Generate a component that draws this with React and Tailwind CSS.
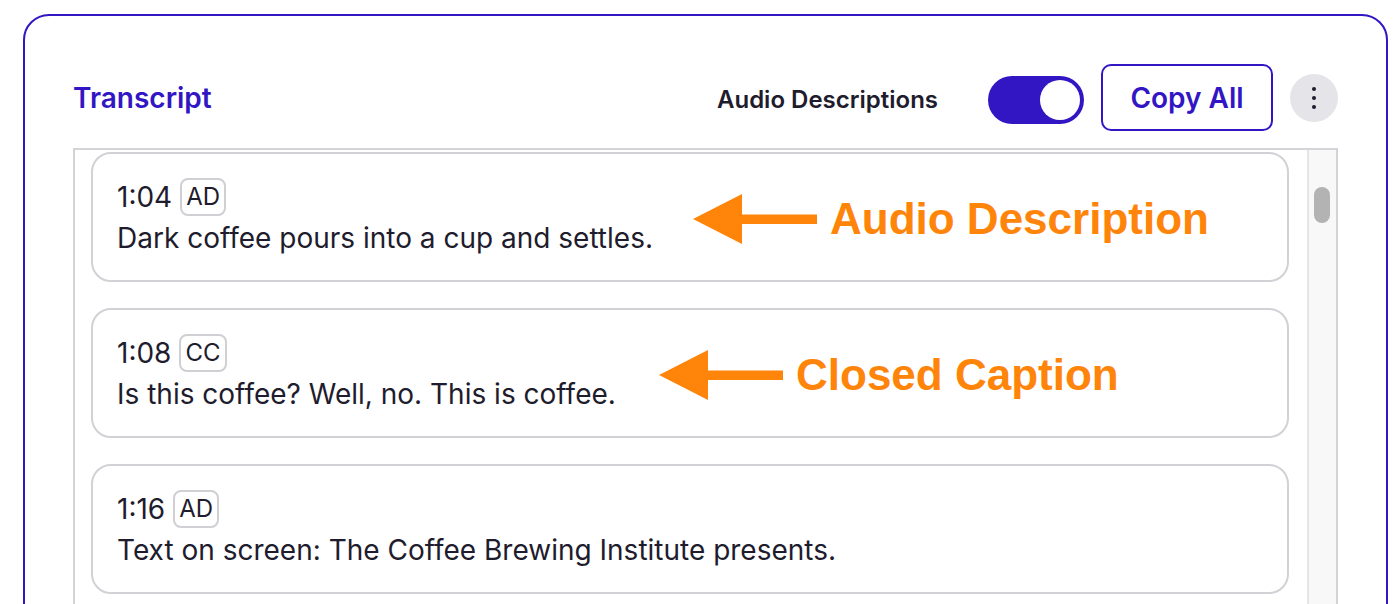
import React from "react";

function Arrow() {
  return (
    <svg width="124" height="50" viewBox="0 0 124 50" className="shrink-0">
      <polygon points="0,25 49,0 49,20.5 124,20.5 124,30 49,30 49,50" fill="#ff840a" />
    </svg>
  );
}

function Annotation({ label, left }) {
  return (
    <div className={`absolute top-[40px] h-[50px] flex items-center ${left}`}>
      <Arrow />
      <span className="ml-[13px] whitespace-nowrap text-[44px] leading-none font-bold text-[#ff840a] [font-family:'Liberation_Sans',Arial,sans-serif]">
        {label}
      </span>
    </div>
  );
}

function Entry({ time, tag, text, annotation, annLeft }) {
  return (
    <div className="relative h-[130px] shrink-0 rounded-[20px] border-2 border-[#d1d1d6] bg-white px-6 py-6">
      <div className="flex h-[38px] items-center gap-2">
        <span className="text-[28px] leading-none text-[#1e1c2d]">{time}</span>
        <span className="flex h-[38px] items-center rounded-lg border-2 border-[#cfcfd4] px-[4px] text-[24px] leading-none text-[#1e1c2d]">
          {tag}
        </span>
      </div>
      <div className="mt-1 text-[28px] leading-9 text-[#1e1c2d] whitespace-nowrap">{text}</div>
      {annotation && <Annotation label={annotation} left={annLeft} />}
    </div>
  );
}

export default function App() {
  return (
    <div className="h-[604px] w-[1400px] overflow-hidden bg-white pt-[14px] pl-[23px] [font-family:Inter,sans-serif]">
      <div className="h-[700px] w-[1365px] rounded-[26px] border-2 border-[#3216c4] bg-white px-12 pt-12">
        <div className="flex h-[67px] items-center justify-between">
          <h2 className="text-[28px] font-semibold leading-none text-[#3216c4]">Transcript</h2>
          <div className="flex items-center">
            <span className="mt-[4px] text-[24px] font-semibold text-[#1e1c2d]">Audio Descriptions</span>
            <div className="mt-[4px] ml-[50px] flex h-[48px] w-[96px] items-center justify-end rounded-full bg-[#3216c4] pr-[4px]">
              <div className="h-[40px] w-[40px] rounded-full bg-white" />
            </div>
            <button className="ml-[17px] flex h-[67px] w-[172px] items-center justify-center rounded-[10px] border-2 border-[#3216c4] bg-white text-[28px] font-semibold text-[#3216c4]">
              Copy All
            </button>
            <div className="ml-[17px] flex h-[48px] w-[48px] flex-col items-center justify-center gap-[5px] rounded-full bg-[#e4e4e9]">
              <span className="h-[4px] w-[4px] rounded-full bg-[#1e1c2d]" />
              <span className="h-[4px] w-[4px] rounded-full bg-[#1e1c2d]" />
              <span className="h-[4px] w-[4px] rounded-full bg-[#1e1c2d]" />
            </div>
          </div>
        </div>
        <div className="mt-[17px] flex h-[600px] border-2 border-[#d4d4d8]">
          <div className="flex flex-1 flex-col gap-[26px] pt-[2px] pl-[16px] pr-[18px]">
            <Entry
              time="1:04"
              tag="AD"
              text="Dark coffee pours into a cup and settles."
              annotation="Audio Description"
              annLeft="left-[600px]"
            />
            <Entry
              time="1:08"
              tag="CC"
              text="Is this coffee? Well, no. This is coffee."
              annotation="Closed Caption"
              annLeft="left-[566px]"
            />
            <Entry
              time="1:16"
              tag="AD"
              text="Text on screen: The Coffee Brewing Institute presents."
            />
          </div>
          <div className="w-[29px] shrink-0 border-l-2 border-[#e4e4e7] bg-[#f8f8f8]">
            <div className="mt-[37px] ml-[5px] h-[36px] w-[16px] rounded-full bg-[#b3b3b3]" />
          </div>
        </div>
      </div>
    </div>
  );
}
